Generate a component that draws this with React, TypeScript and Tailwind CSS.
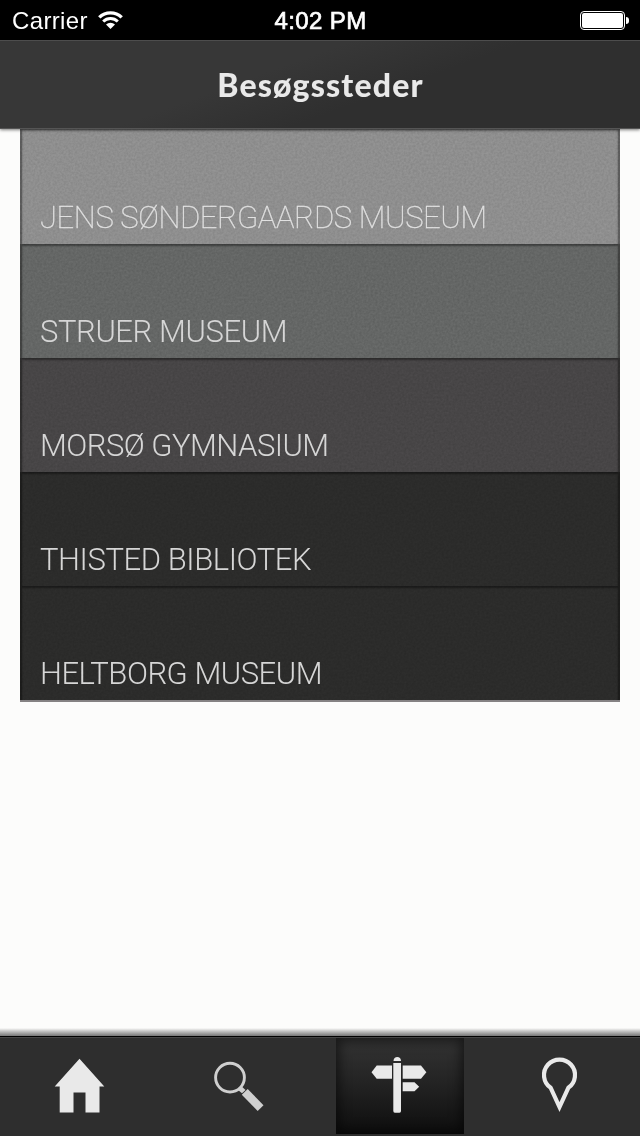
import type { ReactNode } from "react";

const places = [
  { name: "JENS SØNDERGAARDS MUSEUM", row: "h-[116px] bg-[#8e8e8e]", text: "font-thin tracking-[-0.41px] text-[#e2e2e2] [-webkit-text-stroke:0.3px_#e2e2e2]" },
  { name: "STRUER MUSEUM", row: "h-[114px] bg-[#646665]", text: "font-light tracking-[-0.4px] text-[#d6d6d6]" },
  { name: "MORSØ GYMNASIUM", row: "h-[114px] bg-[#474546]", text: "font-light tracking-[-0.53px] text-[#d6d6d6]" },
  { name: "THISTED BIBLIOTEK", row: "h-[114px] bg-[#2b2b2a]", text: "font-light tracking-[-0.42px] text-[#d6d6d6]" },
  { name: "HELTBORG MUSEUM", row: "h-[114px] bg-[#2b2b2a]", text: "font-light tracking-[-0.48px] text-[#d6d6d6]" },
];

function WifiIcon() {
  return (
    <svg width="25" height="19" viewBox="0 0 25 19" fill="none">
      <path d="M1.3 6.4a16 16 0 0 1 22.4 0" stroke="white" strokeWidth="3.4" />
      <path d="M5.2 10.5a10.4 10.4 0 0 1 14.6 0" stroke="white" strokeWidth="3" />
      <path d="M8 13.6a6.4 6.4 0 0 1 9 0L12.5 18Z" fill="white" />
    </svg>
  );
}

function StatusBar() {
  return (
    <div className="h-10 bg-black text-white flex items-center font-['Liberation_Sans',sans-serif] text-[24px] leading-[40px]">
      <div className="flex-1 flex items-center pl-[12px] gap-[10px]">
        <span className="tracking-[0.35px] relative top-px">Carrier</span>
        <WifiIcon />
      </div>
      <div className="tracking-[0.4px] relative top-px [-webkit-text-stroke:0.7px_white]">4:02 PM</div>
      <div className="flex-1 flex items-center justify-end gap-px pr-[11px] pt-px">
        <div className="w-[45px] h-[19px] border border-white rounded-[4px] p-px">
          <div className="h-full bg-white rounded-[2px]" />
        </div>
        <div className="w-[3px] h-[7px] bg-white rounded-r-full" />
      </div>
    </div>
  );
}

// fine paper grain laid over the rows
function Grain() {
  return (
    <svg className="absolute inset-0 w-full h-full opacity-10 mix-blend-overlay pointer-events-none">
      <filter id="grain" colorInterpolationFilters="sRGB">
        <feTurbulence type="fractalNoise" baseFrequency="0.45" numOctaves="2" />
        <feColorMatrix values="1 0 0 0 0  1 0 0 0 0  1 0 0 0 0  0 0 0 0 1" />
      </filter>
      <rect width="100%" height="100%" filter="url(#grain)" />
    </svg>
  );
}

function Tab({ active = false, children }: { active?: boolean; children: ReactNode }) {
  return (
    <div className="flex-1 flex justify-center">
      <button
        type="button"
        className={
          active
            ? "w-32 h-24 flex justify-center pt-[17px] bg-linear-to-b from-[#343434] via-[#222222] to-[#0e0e0e] shadow-[inset_0_0_12px_3px_rgba(0,0,0,0.55)]"
            : "w-32 h-24 flex justify-center pt-[17px]"
        }
      >
        <svg width="64" height="64" viewBox="0 0 64 64" fill="#e9e9e9">
          {children}
        </svg>
      </button>
    </div>
  );
}

export default function App() {
  return (
    <div className="w-[640px] h-[1136px] bg-[#fcfcfb] flex flex-col overflow-hidden">
      <StatusBar />
      <div className="relative z-10 h-[89px] border-t border-t-[#4d4d4d] border-b border-b-[#555] bg-[linear-gradient(160deg,#373737_40%,#2f2f2f_60%)] shadow-[0_1px_3px_rgba(0,0,0,0.5)] flex items-center justify-center">
        <h1 className="pl-px font-['Lato',sans-serif] font-black text-[32px] leading-none tracking-[1.15px] text-[#e9e9e9]">
          Besøgssteder
        </h1>
      </div>

      <div className="flex-1 px-5">
        <div className="relative -mt-px border-b-2 border-[#858283]">
          {places.map((place) => (
            <div
              key={place.name}
              className={`${place.row} flex items-end px-[21px] pb-[8px] border-x-2 border-black/35 shadow-[inset_0_2px_2px_rgba(0,0,0,0.4)]`}
            >
              <span
                className={`${place.text} -ml-[3px] font-['Roboto',sans-serif] text-[31px] leading-[36px] whitespace-nowrap`}
              >
                {place.name}
              </span>
            </div>
          ))}
          <Grain />
        </div>
      </div>

      <div className="h-2 bg-linear-to-b from-[#fcfcfb] to-[#777]" />
      <div className="h-[100px] border-t border-black bg-[#2e2e2e]">
        <div className="h-full border-t border-[#454545] flex">
          <Tab>
            <path d="M31.5 3.7 56.3 31.5H51.5V57.5H37.5V37.5H25.5V57.5H11.7V31.5H6.7Z" />
          </Tab>
          <Tab>
            <g fill="#cfcfcf">
              <circle cx="22" cy="22.6" r="14.4" fill="none" stroke="#cfcfcf" strokeWidth="2.9" />
              <path d="m33 30.7 4.5 4.3-3.5 3.3-4-3.3Z" />
              <path d="M39.7 34 55.5 50.3 49.7 56 33.8 39.7Z" />
            </g>
          </Tab>
          <Tab active>
            <path d="M25.5 6c0-2.5 1.7-4 3.8-4S33 3.5 33 6Z" />
            <path d="M25.3 8H33V56q0 1.7-1.5 1.7H26.8q-1.5 0-1.5-1.7Z" />
            <path d="M24 10.5V23.8H8.7L3.5 17.2 8.7 10.5Z" />
            <path d="M34.7 10.5H53L58.4 17.2 53 23.8H34.7Z" />
            <path d="M34.7 27.2H46.5L51.2 31.7 46.5 36.3H34.7Z" />
          </Tab>
          <Tab>
            <path
              d="M22.7 32.8A15.5 15.5 0 1 1 40.3 32.8L31.5 52Z"
              fill="none"
              stroke="#e9e9e9"
              strokeWidth="4.2"
              strokeMiterlimit="8"
            />
          </Tab>
        </div>
      </div>
    </div>
  );
}
